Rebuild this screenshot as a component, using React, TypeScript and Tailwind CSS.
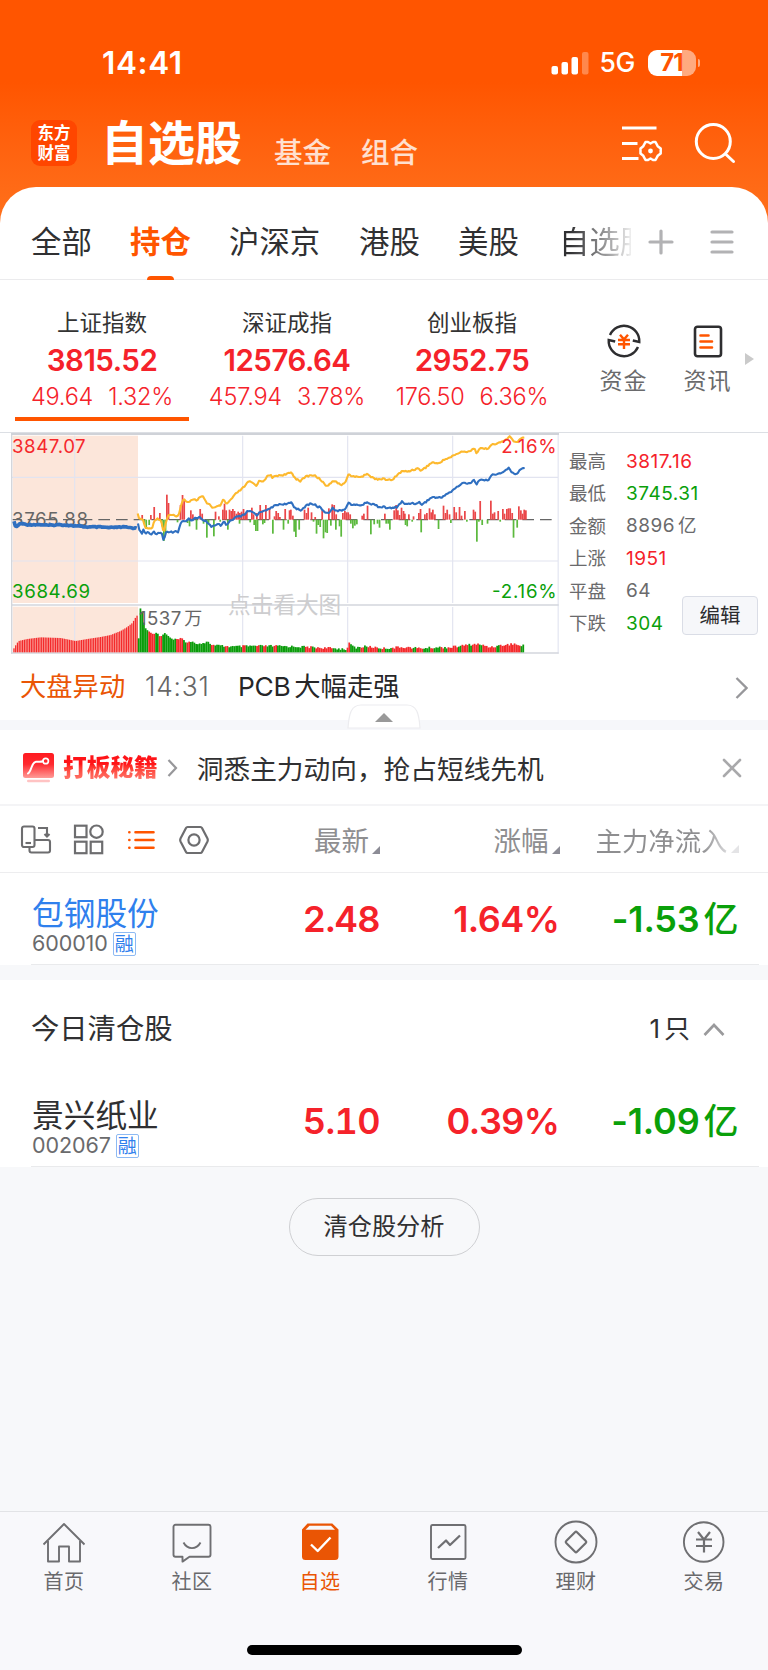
import React from "react";

type Pt = [number, number];

/* ---------- intraday chart data (chart units) ---------- */

const PRE_OPEN: Pt[] = [[42, 290], [48, 308], [60, 295], [80, 299], [120, 299], [150, 301], [180, 299], [230, 303], [260, 306], [300, 306], [330, 308], [370, 306], [412, 310]];

const INDEX_LINE: Pt[] = [
  [414, 298], [420, 320], [426, 326], [430, 314], [436, 326], [444, 322], [452, 328], [460, 320], [470, 326], [478, 322], [486, 326], [491, 350], [496, 326], [500, 318], [508, 324], [514, 320], [520, 325], [526, 320], [534, 320], [540, 300], [546, 290], [556, 288], [566, 280], [574, 286], [584, 280], [600, 276], [608, 288], [620, 290], [634, 304], [646, 302], [655, 298], [665, 302], [672, 290], [680, 302], [690, 288], [700, 284], [712, 274], [722, 274], [732, 270], [742, 260], [756, 260], [770, 270], [780, 262], [796, 254], [804, 256], [816, 246], [836, 238],
  [850, 237], [862, 238], [874, 232], [884, 248], [894, 252], [906, 256], [918, 242], [930, 236], [944, 238], [952, 246], [962, 246], [972, 262], [990, 262], [998, 246], [1006, 256], [1022, 258], [1034, 252], [1046, 234], [1058, 240], [1072, 240], [1088, 240], [1102, 230], [1112, 238], [1126, 238], [1136, 246], [1148, 246], [1160, 248], [1176, 250], [1190, 246], [1206, 230], [1216, 238], [1236, 234], [1252, 236], [1258, 232], [1266, 238], [1278, 230], [1296, 216], [1310, 218], [1324, 218], [1340, 206], [1352, 202], [1370, 186], [1390, 174], [1412, 174], [1422, 164], [1428, 180], [1436, 164], [1450, 166], [1464, 166], [1472, 152], [1488, 148], [1506, 144], [1526, 128], [1534, 142], [1548, 150], [1558, 136], [1574, 128],
];

const LEAD_LINE: Pt[] = [
  [413, 268], [420, 284], [428, 282], [436, 308], [444, 312], [458, 306], [464, 284], [474, 280], [484, 288], [491, 326], [498, 290], [504, 272], [518, 270], [528, 276], [538, 264], [546, 232], [552, 222], [560, 228], [566, 232], [576, 222], [590, 226], [600, 216], [610, 216], [618, 232], [632, 240], [638, 250], [656, 244], [664, 238], [670, 224], [680, 238], [694, 222], [710, 204], [726, 192], [746, 170], [756, 172], [768, 182], [778, 168], [790, 168], [800, 156], [812, 150], [818, 158], [830, 152],
  [846, 150], [860, 148], [874, 142], [886, 160], [902, 168], [918, 154], [940, 150], [960, 162], [978, 182], [990, 178], [998, 166], [1010, 170], [1022, 182], [1036, 170], [1046, 148], [1062, 156], [1090, 154], [1102, 144], [1112, 156], [1130, 162], [1150, 162], [1178, 166], [1190, 150], [1208, 138], [1222, 140], [1252, 130], [1262, 136], [1276, 128], [1296, 112], [1318, 116], [1330, 104], [1350, 98], [1360, 92], [1380, 82], [1410, 78], [1422, 70], [1430, 84], [1438, 70], [1462, 72], [1470, 62], [1490, 56], [1512, 48], [1530, 34], [1540, 50], [1550, 52], [1558, 44], [1574, 36],
];

const UP_BARS: Pt[] = [
  [426, 270], [452, 270], [462, 246], [479, 264], [500, 209], [505, 234], [541, 240], [547, 210], [552, 222], [572, 256], [578, 268], [600, 252], [606, 266], [646, 260], [656, 274], [668, 254], [673, 236], [678, 256], [688, 254], [693, 258], [698, 252], [703, 258], [709, 266], [714, 260], [719, 264], [724, 260], [730, 252], [735, 266], [740, 258], [755, 248], [760, 268], [770, 264], [780, 240], [786, 256], [797, 240], [808, 248], [823, 274], [828, 258], [834, 264], [839, 276], [855, 252], [868, 256],
  [872, 254], [878, 272], [913, 254], [919, 264], [924, 248], [934, 262], [945, 276], [966, 256], [986, 250], [996, 238], [1002, 240], [1008, 268], [1028, 264], [1034, 258], [1039, 262], [1044, 262], [1050, 268], [1086, 272], [1091, 266], [1102, 242], [1154, 266], [1182, 256], [1188, 240], [1193, 256], [1198, 270], [1204, 248], [1210, 258], [1214, 266], [1226, 268], [1240, 274], [1256, 264], [1261, 252], [1274, 268], [1280, 264], [1288, 250], [1293, 262], [1298, 254], [1304, 268], [1330, 242], [1336, 264], [1341, 254], [1348, 268], [1362, 246], [1368, 262], [1378, 246], [1384, 272], [1394, 258], [1420, 254], [1425, 260], [1440, 228], [1472, 227], [1478, 266], [1483, 262], [1494, 258], [1508, 252], [1513, 266], [1520, 252], [1525, 250], [1530, 250], [1536, 264], [1556, 244], [1562, 256], [1567, 266], [1572, 254], [1577, 256],
];

const DOWN_BARS: Pt[] = [
  [432, 294], [438, 312], [447, 300], [485, 304], [491, 348], [496, 322], [532, 292], [562, 294], [568, 304], [589, 314], [610, 296], [620, 338], [625, 294], [641, 334], [660, 290], [683, 314], [718, 296], [750, 292], [762, 300], [767, 318], [772, 318], [788, 298], [793, 294], [818, 326], [850, 314], [864, 296],
  [882, 320], [887, 336], [897, 314], [940, 290], [949, 326], [954, 300], [960, 306], [970, 340], [976, 322], [981, 324], [992, 302], [1007, 314], [1018, 304], [1023, 335], [1052, 296], [1058, 310], [1064, 302], [1070, 298], [1112, 328], [1122, 298], [1132, 296], [1138, 308], [1158, 296], [1164, 296], [1169, 314], [1216, 300], [1221, 304], [1236, 290], [1263, 322], [1315, 312], [1352, 294], [1400, 290], [1430, 350], [1436, 290], [1446, 300], [1462, 296], [1500, 290], [1540, 338], [1551, 308],
];

const VOLUME_PRE: Pt[] = [[40, 670], [48, 656], [54, 648], [80, 642], [120, 637], [180, 639], [225, 648], [260, 642], [300, 636], [330, 630], [360, 618], [380, 606], [395, 594], [408, 572]];
const VOLUME: Pt[] = [[415, 640], [416, 640], [421, 545], [426, 560], [431, 592], [437, 612], [450, 622], [460, 628], [470, 622], [480, 636], [494, 624], [510, 638], [520, 644], [545, 642], [560, 651], [580, 652], [600, 656], [620, 650], [640, 661], [700, 665], [760, 663], [820, 663], [900, 665], [960, 668], [1040, 672], [1046, 668], [1049, 636], [1053, 660], [1065, 668], [1100, 664], [1150, 670], [1210, 666], [1260, 670], [1310, 667], [1350, 667], [1400, 660], [1430, 657], [1470, 666], [1510, 660], [1545, 656], [1560, 664], [1574, 656]];

function sample(pts: Pt[], x: number): number {
  for (let i = 1; i < pts.length; i++) {
    if (x <= pts[i][0]) {
      const [x0, y0] = pts[i - 1];
      const [x1, y1] = pts[i];
      return y0 + ((y1 - y0) * (x - x0)) / (x1 - x0);
    }
  }
  return pts[pts.length - 1][1];
}

const noise = (n: number) => {
  const v = Math.sin(n * 12.9898) * 43758.5453;
  return v - Math.floor(v);
};

const path = (pts: Pt[], jitter: number) => {
  const out: string[] = [];
  for (let x = pts[0][0], i = 0; x <= pts[pts.length - 1][0]; x += 4, i++) {
    out.push(`${x},${(sample(pts, x) + (noise(i) - 0.5) * jitter).toFixed(1)}`);
  }
  return out.join(" ");
};

const preBars = Array.from({ length: 72 }, (_, i) => 40 + i * 5.2);
const volBars = Array.from({ length: 222 }, (_, i) => 415.5 + i * 5.22);

function Chart() {
  return (
    <svg className="block h-[221px] w-[548px]" viewBox="33 24 1644 663">
      <rect x="38" y="32" width="376" height="502" fill="#fce6da" />
      <rect x="38" y="545" width="376" height="138" fill="#fce6da" />
      <g stroke="#e2e4f0" strokeWidth="3.5">
        {[224, 728, 1043, 1358].map((x) => (
          <g key={x}>
            <line x1={x} x2={x} y1="32" y2="534" />
            <line x1={x} x2={x} y1="546" y2="682" />
          </g>
        ))}
        <line x1="36" x2="1674" y1="157" y2="157" />
        <line x1="36" x2="1674" y1="408" y2="408" />
        <line x1="1674.5" x2="1674.5" y1="26" y2="686" />
      </g>
      <g stroke="#d3d6dc" strokeWidth="4">
        <line x1="35" x2="35" y1="24" y2="686" />
        <line x1="33" x2="1676" y1="540" y2="540" />
        <line x1="33" x2="1676" y1="684" y2="684" />
      </g>
      <line x1="33" x2="1677" y1="27" y2="27" stroke="#cfd2d8" strokeWidth="6" />

      <text x="684" y="565" fontSize="68" fill="#cdcdcf" fontFamily="'Noto Sans CJK SC', sans-serif">点击看大图</text>
      <line x1="38" x2="1668" y1="284" y2="284" stroke="#666" strokeWidth="4" strokeDasharray="35 18" strokeDashoffset="8" />
      <g fontFamily="Inter, 'Noto Sans CJK SC', sans-serif" fontSize="56">
        <text x="36" y="303" fill="#666" textLength="228">3765.88</text>
      </g>
      {UP_BARS.map(([x, y]) => (
        <rect key={`u${x}`} x={x - 2} y={y} width="5.2" height={284 - y} fill="#ea4749" />
      ))}
      {DOWN_BARS.map(([x, y]) => (
        <rect key={`d${x}`} x={x - 2} y="284" width="5.2" height={y - 284} fill="#5cb93e" />
      ))}
      <polyline points={path(PRE_OPEN, 3)} fill="none" stroke="#2f6fc0" strokeWidth="11" strokeLinejoin="round" />
      <polyline points={path(LEAD_LINE, 5)} fill="none" stroke="#fdb92e" strokeWidth="6.3" strokeLinejoin="round" />
      <polyline points={path(INDEX_LINE, 5)} fill="none" stroke="#2f6fc0" strokeWidth="6.3" strokeLinejoin="round" />

      {preBars.map((x) => {
        const y = sample(VOLUME_PRE, x);
        return <rect key={x} x={x} y={y} width="3.9" height={682 - y} fill="#f4292b" />;
      })}
      {volBars.map((x, i) => {
        const y = sample(VOLUME, x) + (x > 520 ? (noise(i + 3) - 0.5) * 7 : 0);
        const green = x < 423 || (noise(Math.floor(i / 2) + 41) < (x < 1100 ? 0.5 : 0.32) && Math.abs(x - 1048) > 4);
        return <rect key={x} x={x - 2} y={y} width="5.3" height={682 - y} fill={green ? "#0a9c0a" : "#f4292b"} />;
      })}

      <g fontFamily="Inter, 'Noto Sans CJK SC', sans-serif" fontSize="56">
        <text x="36" y="84" fill="#f5282c" textLength="221">3847.07</text>
        <text x="36" y="519" fill="#0aa00a" textLength="234">3684.69</text>
        <text x="1504" y="84" fill="#f5282c" textLength="166">2.16%</text>
        <text x="1476" y="518" fill="#0aa00a" textLength="194">-2.16%</text>
        <text x="417" y="600" fill="#666" textLength="127">1537</text>
        <text x="553" y="601" fill="#666" fontSize="54">万</text>
      </g>
    </svg>
  );
}

/* ---------- header ---------- */

function StatusBar() {
  return (
    <div className="flex h-[100px] items-center pt-[25px] pl-[102px] pr-[68px]">
      <span className="text-[31.5px] font-semibold leading-none tracking-[0.6px]">14:41</span>
      <div className="ml-auto flex items-center">
        <svg className="h-6 w-[38px]" viewBox="0 0 38 24" fill="#fff">
          <rect x="0.5" y="15" width="6.5" height="8.5" rx="2" />
          <rect x="10.5" y="11" width="6.5" height="12.5" rx="2" />
          <rect x="20.5" y="6" width="6.5" height="17.5" rx="2" />
          <rect x="31" y="1" width="6.5" height="22.5" rx="2" opacity="0.3" />
        </svg>
        <span className="ml-[11px] w-[38px] text-[26.5px] font-medium leading-none tracking-[-0.4px]">5G</span>
        <div className="ml-[10px] flex h-[26px] w-[48px] items-center justify-center rounded-[9px] bg-linear-to-r from-white from-71% to-white/50 to-71% text-[24px] font-bold leading-none tracking-[-1px] text-[#ff5500]">71</div>
        <div className="ml-[2px] h-[8px] w-[2.5px] rounded-r-full bg-white/50" />
      </div>
    </div>
  );
}

function TitleBar() {
  return (
    <div className="flex h-[87px] pl-[31px]">
      <div className="mt-[20px] flex size-[46px] flex-col items-center justify-center rounded-[9px] bg-[#ff4600] pt-px text-[16.5px] font-bold leading-[19.5px]">
        <span>东方</span>
        <span>财富</span>
      </div>
      <h1 className="mt-[20px] ml-[24px] h-[46px] w-[141px] text-[47px] font-bold leading-[46px]">自选股</h1>
      <span className="mt-[39px] ml-[32px] h-7 w-[57px] text-[28.5px] font-medium leading-7 text-white/80">基金</span>
      <span className="mt-[39px] ml-[30px] h-7 w-[57px] text-[28.5px] font-medium leading-7 text-white/80">组合</span>
      <svg className="mt-[20px] ml-[203px] h-[44px] w-[44px]" viewBox="0 0 44 44" fill="none" stroke="#fff" strokeWidth="3">
        <path d="M1 8h34.500M1 23.500h15.500M1 38.500h16.500" />
        <path strokeWidth="2.500" strokeLinejoin="round" d="M24.500 22h2.500l2.500 1.500 2.500-1.500h2.500l2.200 4.200 3 2.300v5l-3 2.300-2.200 4.200h-2.500l-2.500-1.500-2.500 1.500h-2.500l-2.200-4.200-2.800-2.300v-5l2.800-2.300z" />
        <circle cx="29.500" cy="31" r="2.400" fill="#fff" stroke="none" />
      </svg>
      <svg className="mt-[20px] ml-[29px] h-[44px] w-[44px]" viewBox="0 0 44 44" fill="none" stroke="#fff" strokeWidth="3" strokeLinecap="round">
        <circle cx="19.300" cy="21.500" r="17" />
        <path d="M31.500 34l8 7.500" />
      </svg>
    </div>
  );
}

function Tabs() {
  return (
    <div className="flex h-[93px] items-center border-b border-[#ebebed] pt-[18px] pl-[31px] text-[30.4px] leading-none text-[#303032]">
      <span className="w-[99px]">全部</span>
      <span className="relative w-[99px] font-bold text-[#ff5500]">
        持仓
        <i className="absolute top-[49px] left-[17px] h-[4px] w-[27px] rounded-t-sm bg-[#ff5500]" />
      </span>
      <span className="w-[130px]">沪深京</span>
      <span className="w-[99px]">港股</span>
      <span className="w-[101px]">美股</span>
      <span className="w-[72px] overflow-hidden bg-linear-to-r from-[#303032] from-15% to-[#eee] bg-clip-text whitespace-nowrap text-transparent">自选股</span>
      <svg className="ml-[17px] size-[26px]" viewBox="0 0 26 26" stroke="#b2b2b4" strokeWidth="3.200" strokeLinecap="round">
        <path d="M13 2v22M2 13h22" />
      </svg>
      <svg className="ml-[36px] h-[26px] w-[24px]" viewBox="0 0 24 26" stroke="#b2b2b4" strokeWidth="3.200" strokeLinecap="round">
        <path d="M2 3h20M2 13h20M2 23h20" />
      </svg>
    </div>
  );
}

/* ---------- indices ---------- */

const INDICES = [
  { name: "上证指数", value: "3815.52", change: "49.64", pct: "1.32%", active: true },
  { name: "深证成指", value: "12576.64", change: "457.94", pct: "3.78%" },
  { name: "创业板指", value: "2952.75", change: "176.50", pct: "6.36%" },
];

function Indices() {
  return (
    <div className="flex h-[152px] pl-[9.500px]">
      {INDICES.map((it) => (
        <div key={it.name} className="flex w-[185px] flex-col items-center text-[#f5222a]">
          <span className="mt-[31px] h-[24px] text-[22.5px] leading-[24px] text-[#333]">{it.name}</span>
          <span className="mt-[10px] h-[30px] text-[29.5px] font-semibold leading-[30px] tracking-[-0.5px]">{it.value}</span>
          <span className="mt-[10px] flex h-[24px] gap-[15px] text-[23.5px] font-light leading-[24px] tracking-[-0.2px]">
            <span>{it.change}</span>
            <span>{it.pct}</span>
          </span>
          {it.active && <div className="mt-[8px] h-[4px] w-[174px] bg-[#ff5500]" />}
        </div>
      ))}
      <div className="ml-[34px] flex w-[50px] flex-col items-center">
        <svg className="mt-[43px] size-[36px]" viewBox="0 0 36 36" fill="none" stroke="#2e2e30" strokeWidth="2.400">
          <path d="M4 12A15.300 15.300 0 0 1 33.300 19l-6.500-1.500" />
          <path d="M32 24A15.300 15.300 0 0 1 2.700 17l6.500 1.500" />
          <path stroke="#ff5500" d="M14 11.800l4 4.600 4-4.600M12 17h12M12 21.300h12M18 16.500v9.500" />
        </svg>
        <span className="mt-[10px] text-[23px] leading-[24px] tracking-[1px] text-[#6a6a6c]">资金</span>
      </div>
      <div className="ml-[34px] flex w-[50px] flex-col items-center">
        <svg className="mt-[43px] size-[36px]" viewBox="0 0 36 36" fill="none" stroke="#2e2e30" strokeWidth="2.600">
          <rect x="5" y="3.800" width="26" height="29.500" rx="2.500" />
          <path stroke="#ff5500" strokeLinecap="round" d="M10.500 12.500h8M10.500 18.500h11.500M10.500 24.500h11.500" />
        </svg>
        <span className="mt-[10px] text-[23px] leading-[24px] tracking-[1px] text-[#6a6a6c]">资讯</span>
      </div>
      <svg className="mt-[73px] ml-[12px] h-[12px] w-[9px]" viewBox="0 0 9 12" fill="#cacaca">
        <path d="M0 0l9 6-9 6z" />
      </svg>
    </div>
  );
}

const STATS: [string, React.ReactNode, string][] = [
  ["最高", "3817.16", "text-[#f5222a]"],
  ["最低", "3745.31", "text-[#0aa00a]"],
  ["金额", <>8896<span className="ml-[3px] text-[18.5px]">亿</span></>, "text-[#6a6a6c]"],
  ["上涨", "1951", "text-[#f5222a]"],
  ["平盘", "64", "text-[#6a6a6c]"],
  ["下跌", "304", "text-[#0aa00a]"],
];

function Market() {
  return (
    <div className="flex h-[222px] border-t border-[#dcdfe4]">
      <div className="ml-[11px] w-[548px] shrink-0">
        <Chart />
      </div>
      <div className="mt-[12px] ml-[10px] w-[113px] shrink-0">
        {STATS.map(([label, value, color]) => (
          <div key={label} className="flex h-[32.400px] items-center text-[18.5px] leading-none">
            <span className="w-[57px] shrink-0 text-[#6a6a6c]">{label}</span>
            <span className={`text-[19px] whitespace-nowrap tracking-[0.5px] ${color}`}>{value}</span>
          </div>
        ))}
      </div>
      <button className="mt-[163px] h-[39px] w-[76px] shrink-0 rounded-[4px] border border-[#dadde6] bg-[#f6f7fa] pt-[2px] text-[20.5px] leading-none text-[#2c2c2e]">编辑</button>
    </div>
  );
}

function News() {
  return (
    <div className="relative flex h-[76px] items-center border-b-[10px] border-[#f6f7fa] pt-px pl-[20px] text-[26.3px] leading-none">
      <span className="w-[125px] text-[#ea5504]">大盘异动</span>
      <span className="w-[93px] font-light tracking-[0.8px] text-[#666]">14:31</span>
      <span className="tracking-[-0.3px] text-[#262628]">PCB<span className="ml-[4px] tracking-normal">大幅走强</span></span>
      <svg className="ml-auto mr-[20px] h-[22px] w-[13px]" viewBox="0 0 13 22" fill="none" stroke="#97979a" strokeWidth="2.300">
        <path d="M1.500 1l10 10-10 10" />
      </svg>
      <svg className="absolute top-[50px] left-[347px] h-[25px] w-[74px]" viewBox="0 0 74 25">
        <path d="M1 24C2 10 4 1 14 1h46c10 0 12 9 13 23z" fill="#fff" stroke="#ececef" strokeWidth="1.200" />
        <path d="M28 18l9-9 9 9z" fill="#999" />
      </svg>
    </div>
  );
}

function Promo() {
  return (
    <div className="flex h-[76px] items-center border-b-2 border-[#f4f4f6] pt-[2px] pl-[23px]">
      <svg className="h-[30px] w-[31px]" viewBox="0 0 31 30" fill="none">
        <defs>
          <linearGradient id="promo" x1="0" y1="0" x2="0" y2="1">
            <stop offset="0" stopColor="#ff1a20" />
            <stop offset="0.450" stopColor="#ff2a30" />
            <stop offset="1" stopColor="#ff9b97" />
          </linearGradient>
        </defs>
        <rect y="0" width="31" height="25" rx="2.500" fill="url(#promo)" />
        <path d="M5 20.500C9 18 8 9.500 13 8.700c3-.3 4 .5 7-.5" stroke="#fff" strokeWidth="2" strokeLinecap="round" />
        <circle cx="22.700" cy="8" r="2.700" stroke="#fff" strokeWidth="1.700" />
        <rect x="4" y="26.800" width="23" height="2.400" rx="1.200" fill="#ffc3c3" />
      </svg>
      <span className="ml-[9px] bg-linear-to-b from-[#ff1418] from-35% to-[#ff7a70] bg-clip-text text-[23.7px] font-black leading-[26px] text-transparent">打板秘籍</span>
      <svg className="ml-[9px] h-[18px] w-[11px]" viewBox="0 0 11 18" fill="none" stroke="#97979a" strokeWidth="2.200">
        <path d="M1.500 1l7.500 8-7.500 8" />
      </svg>
      <span className="mt-[2px] ml-[19px] text-[26.7px] leading-none text-[#303032]">洞悉主力动向，抢占短线先机</span>
      <svg className="ml-auto mr-[26px] size-[20px]" viewBox="0 0 20 20" stroke="#a9a9ab" strokeWidth="2.600" strokeLinecap="round">
        <path d="M2 2l16 16M18 2L2 18" />
      </svg>
    </div>
  );
}

/* ---------- list ---------- */

const COLS = "grid grid-cols-[200px_180px_179.5px_179px]";

function SortMark({ faded }: { faded?: boolean }) {
  return (
    <svg className="ml-[3px] h-[8px] w-[8px] translate-y-[8px]" viewBox="0 0 8 8">
      <path d="M8 0v8H0z" fill={faded ? "#e4e4e6" : "#8c8c96"} />
    </svg>
  );
}

function ListHeader() {
  return (
    <div className={`${COLS} h-[67px] items-center border-b border-[#ededef] text-[27.5px] leading-none text-[#8e8e90]`}>
      <div className="flex pt-[1px] pl-[20px]">
        <svg className="h-[32px] w-[32px] shrink-0" viewBox="0 0 32 32" fill="none" stroke="#6d6d6f" strokeWidth="2.100">
          <rect x="2" y="2.500" width="12.500" height="20.500" rx="2" />
          <path d="M5.500 19h5.500" />
          <path d="M18 4h9v9M24.500 10l2.500 2.500 2.500-2.500" />
          <path d="M15 16h13a2 2 0 0 1 2 2v8.500a2 2 0 0 1-2 2H11.500a2 2 0 0 1-2-2v-3" />
        </svg>
        <svg className="ml-[21px] h-[32px] w-[32px] shrink-0" viewBox="0 0 32 32" fill="none" stroke="#6d6d6f" strokeWidth="2.200">
          <rect x="2" y="1.700" width="11.500" height="11.500" />
          <circle cx="23.500" cy="7.700" r="6.200" />
          <rect x="2" y="17.700" width="11.500" height="11.500" />
          <rect x="17.700" y="17.700" width="11.500" height="11.500" />
        </svg>
        <svg className="ml-[21px] h-[32px] w-[32px] shrink-0" viewBox="0 0 32 32" fill="none" stroke="#ff5500" strokeWidth="2.600" strokeLinecap="round">
          <path d="M9.500 8.300h18M9.500 16h18M9.500 23.700h18M3.300 8.300h.1M3.300 16h.1M3.300 23.700h.1" />
        </svg>
        <svg className="ml-[20px] h-[32px] w-[32px] shrink-0" viewBox="0 0 32 32" fill="none" stroke="#6d6d6f" strokeWidth="2.200" strokeLinejoin="round">
          <path d="M9.500 3h13q1 0 1.500 1l5.500 10.500q.7 1.500 0 3L24 28q-.5 1-1.500 1h-13Q8.500 29 8 28L2.500 17.500q-.7-1.500 0-3L8 4q.5-1 1.500-1z" />
          <circle cx="16" cy="16" r="5.600" />
        </svg>
      </div>
      <div className="flex items-center justify-end pt-[5px]">最新<SortMark /></div>
      <div className="flex items-center justify-end pt-[5px]">涨幅<SortMark /></div>
      <div className="flex items-center justify-end pt-[4px] text-[26.4px] whitespace-nowrap">
        <span className="bg-linear-to-r from-[#8e8e90] from-80% to-[#dadadc] bg-clip-text text-transparent">主力净流入</span>
        <SortMark faded />
      </div>
    </div>
  );
}

type Stock = { name: string; code: string; price: string; pct: string; flow: string; held?: boolean };

function StockRow({ s }: { s: Stock }) {
  return (
    <div className="h-[92px]">
      <div className={`${COLS} h-[91px] items-center text-[36px] font-semibold leading-none text-[#f5222a]`}>
        <div className="pt-[16px] pl-[32px] font-normal">
          <div className={`h-[34px] text-[31.7px] leading-[34px] ${s.held ? "text-[#2f80ed]" : "text-[#303032]"}`}>{s.name}</div>
          <div className="mt-[1px] flex items-center gap-[5px]">
            <span className="text-[21.5px] leading-none tracking-[-0.1px] text-[#6a6a6c]">{s.code}</span>
            <span className="flex h-[24px] w-[23px] items-center justify-center rounded-[2px] border border-[#8dbaf3] text-[19px] leading-none text-[#2f80ed]">融</span>
          </div>
        </div>
        <span className="pt-px text-right tracking-[-0.6px] tabular-nums">{s.price}</span>
        <span className="pt-px text-right tracking-[-0.5px]">{s.pct}</span>
        <span className="flex items-center justify-end pt-px text-[#0aa00a]">
          <span className="tracking-[-0.2px]">{s.flow}</span>
          <span className="ml-[4px] text-[35px] font-medium">亿</span>
        </span>
      </div>
      <div className="mr-[9px] ml-[31px] h-px bg-[#e9eaec]" />
    </div>
  );
}

/* ---------- bottom navigation ---------- */

const NAV = [
  {
    label: "首页",
    icon: (
      <>
        <path d="M1.500 24.500L22 4l20.500 20.500" />
        <path d="M6 21v20.500h11V26.500h10v15h11V21" />
      </>
    ),
  },
  {
    label: "社区",
    icon: (
      <>
        <path d="M5.500 4.800h33a2 2 0 0 1 2 2v28a2 2 0 0 1-2 2H19.500l-7 4.800v-4.800h-7a2 2 0 0 1-2-2v-28a2 2 0 0 1 2-2z" />
        <path d="M13.500 22.500c4 7.500 13 7.500 17 0" />
      </>
    ),
  },
  {
    label: "自选",
    active: true,
    icon: (
      <>
        <path d="M9.500 3.500h24.800l6.200 6V36.500a3.500 3.500 0 0 1-3.500 3.500H7.500A3.500 3.500 0 0 1 4 36.500v-27z" fill="#ea5504" stroke="none" />
        <path d="M7.500 9.700l4-4h21.500l4 4z" fill="#f8f8fb" stroke="none" />
        <path d="M13 24.500l6.700 6.500 12.800-13.500" stroke="#fff" strokeWidth="2.400" />
      </>
    ),
  },
  {
    label: "行情",
    icon: (
      <>
        <rect x="5" y="5" width="34.500" height="34" rx="1.500" />
        <path d="M12 28l8-7.500 4 4.500 10-9.500" strokeWidth="2.300" />
      </>
    ),
  },
  {
    label: "理财",
    icon: (
      <>
        <circle cx="22" cy="22" r="20.500" />
        <path d="M21 12.200q1-1 2 0l8.800 8.800q1 1 0 2L23 31.800q-1 1-2 0L12.200 23q-1-1 0-2z" strokeWidth="2.200" />
      </>
    ),
  },
  {
    label: "交易",
    icon: (
      <>
        <circle cx="21.700" cy="22" r="19.800" />
        <path d="M16 12l6 7.500 6-7.500M14 19.500h16M14 26h16M22 19.500V32.500" strokeWidth="2.200" />
      </>
    ),
  },
];

function BottomNav() {
  return (
    <nav className="mt-auto h-[159px] border-t border-[#e2e3e6] bg-[#f8f8fb]">
      <div className="grid grid-cols-6">
        {NAV.map((n) => (
          <div key={n.label} className="flex flex-col items-center">
            <svg className="mt-[7.500px] size-[44px]" viewBox="0 0 44 44" fill="none" stroke="#6f6f72" strokeWidth="1.900" strokeLinejoin="round">
              {n.icon}
            </svg>
            <span className={`mt-[7.500px] text-[20px] leading-[22px] tracking-[0.5px] ${n.active ? "text-[#ea5504]" : "text-[#69696c]"}`}>{n.label}</span>
          </div>
        ))}
      </div>
      <div className="mx-auto mt-[52px] h-[10px] w-[275px] rounded-full bg-black" />
    </nav>
  );
}

export default function App() {
  return (
    <main className="flex h-[1670px] w-[768px] flex-col overflow-hidden bg-[#f7f8fa] font-[Inter,'Noto_Sans_CJK_SC',sans-serif]">
      <div className="bg-linear-to-b from-[#ff5500] from-[82px] to-[#ff6f1a] to-[215px] text-white">
        <StatusBar />
        <TitleBar />
        <div className="rounded-t-[36px] bg-white">
          <Tabs />
        </div>
      </div>
      <div className="bg-white">
        <Indices />
        <Market />
        <News />
        <Promo />
        <ListHeader />
        <StockRow s={{ name: "包钢股份", code: "600010", price: "2.48", pct: "1.64%", flow: "-1.53", held: true }} />
      </div>
      <div className="mt-[15px] bg-white">
        <div className="flex h-[95px] items-center pt-[3px] pl-[31px] text-[28.3px] leading-none text-[#303032]">
          <span>今日清仓股</span>
          <span className="ml-auto text-[26px]">1<span className="ml-[4px]">只</span></span>
          <svg className="mr-[43px] ml-[13px] h-[13px] w-[22px]" viewBox="0 0 22 13" fill="none" stroke="#9a9a9c" strokeWidth="2.600">
            <path d="M1.500 12L11 2l9.500 10" />
          </svg>
        </div>
        <StockRow s={{ name: "景兴纸业", code: "002067", price: "5.10", pct: "0.39%", flow: "-1.09" }} />
      </div>
      <button className="mt-[31px] ml-[288.500px] h-[58px] w-[191px] shrink-0 rounded-full border-[1.5px] border-[#cfd0d3] pt-px text-[24.2px] leading-none text-[#303032]">清仓股分析</button>
      <BottomNav />
    </main>
  );
}
